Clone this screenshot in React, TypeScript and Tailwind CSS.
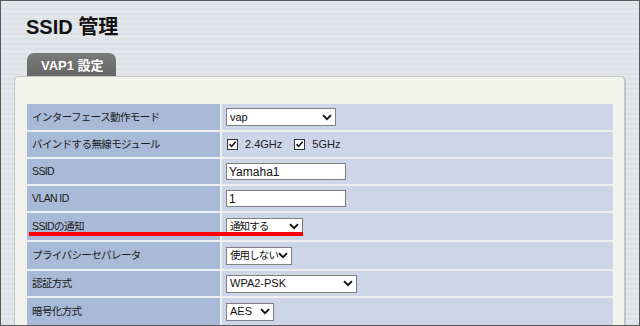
import React from "react";

const latin = { fontFamily: '"Liberation Sans", "Noto Sans CJK JP", sans-serif' };
const cjk = { fontFamily: '"Noto Sans CJK JP", "Liberation Sans", sans-serif' };

function Chevron() {
  return (
    <svg width="10" height="7" viewBox="0 0 10 7" className="shrink-0">
      <path d="M1 1.2 L5 5.2 L9 1.2" fill="none" stroke="#111" strokeWidth="1.9" />
    </svg>
  );
}

function Select({ value, w, jp }: { value: string; w: number; jp?: boolean }) {
  return (
    <div
      className="h-[18px] bg-white border border-[#7f7f7f] flex items-center justify-between pl-[3px] pr-[3px] text-[#111] whitespace-nowrap"
      style={{ width: w }}
    >
      <span
        className={jp ? "shrink-0 text-[10.5px] tracking-[-0.9px] leading-none" : "shrink-0 text-[11px] leading-none"}
        style={jp ? cjk : latin}
      >
        {value}
      </span>
      <Chevron />
    </div>
  );
}

function Input({ value }: { value: string }) {
  return (
    <div className="h-[17px] w-[120px] bg-white border border-[#7f7f7f] flex items-center pl-[2px] text-[12px] text-[#111] leading-none" style={latin}>
      {value}
    </div>
  );
}

function Check() {
  return (
    <div className="w-[11px] h-[11px] bg-white border border-[#333] flex items-center justify-center">
      <svg width="9" height="9" viewBox="0 0 9 9">
        <path d="M1.5 4.2 L3.6 6.4 L7.6 1.8" fill="none" stroke="#111" strokeWidth="1.6" />
      </svg>
    </div>
  );
}

const rows: { label: string; h: string; content: React.ReactNode }[] = [
  { label: "インターフェース動作モード", h: "h-[26px]", content: <Select value="vap" w={110} /> },
  {
    label: "バインドする無線モジュール",
    h: "h-[25px]",
    content: (
      <div className="flex items-center text-[11px] text-[#222]" style={latin}>
        <div className="ml-[1px]"><Check /></div>
        <span className="ml-[7px]">2.4GHz</span>
        <div className="ml-[12px]"><Check /></div>
        <span className="ml-[7px]">5GHz</span>
      </div>
    ),
  },
  { label: "SSID", h: "h-[25px]", content: <Input value="Yamaha1" /> },
  { label: "VLAN ID", h: "h-[25px]", content: <Input value="1" /> },
  { label: "SSIDの通知", h: "h-[27px]", content: <Select value="通知する" w={77} jp /> },
  { label: "プライバシーセパレータ", h: "h-[27px]", content: <Select value="使用しない" w={66} jp /> },
  { label: "認証方式", h: "h-[25px]", content: <Select value="WPA2-PSK" w={131} /> },
  { label: "暗号化方式", h: "h-[27px]", content: <Select value="AES" w={48} /> },
];

export default function App() {
  return (
    <div
      className="relative w-[640px] h-[326px] overflow-hidden border border-[#5a5a5a] bg-[#e1e4ea] bg-[repeating-linear-gradient(180deg,#e3e6eb_0px,#e3e6eb_2px,#d6dae1_3px,#e8eaee_4px,#dde0e6_5px)]"
    >
      <div className="pt-[14px] pl-[25px]">
        <h1 className="text-[20px] leading-[24px] font-bold text-[#111]" style={latin}>
          SSID 管理
        </h1>
      </div>
      <div className="mt-[14px] ml-[26px] w-[89px] h-[23px] rounded-t-[7px] bg-[#6c6c6c] bg-[linear-gradient(180deg,#7a7a7a,#666666)] flex items-center pl-[14px] pt-[1px]">
        <span className="text-[13px] font-bold text-white leading-none" style={latin}>
          VAP1 設定
        </span>
      </div>
      <div className="ml-[13px] mr-[13px] h-[260px] rounded-t-[5px] border border-[#c8c8c3] border-r-2 border-r-[#c4c4c0] bg-[#f3f3ed] pt-[27px] pl-[12px] pr-[11px]">
        <div className="grid grid-cols-[193px_1fr] gap-x-[2px] gap-y-[2px] bg-[#eef0ef]">
          {rows.map((r, i) => (
            <React.Fragment key={i}>
              <div className={`${r.h} bg-[#a8bad7] flex items-center pl-[5px]`}>
                <span className="text-[10.5px] tracking-[-0.6px] text-[#1a1a1a] leading-none whitespace-nowrap" style={latin}>
                  {r.label}
                </span>
              </div>
              <div className={`${r.h} bg-[#cdd5e9] flex items-center pl-[4px]`}>{r.content}</div>
            </React.Fragment>
          ))}
        </div>
      </div>
      <div className="absolute left-[28px] top-[231px] w-[274px] h-[4px] bg-[#ff0000]" />
    </div>
  );
}
